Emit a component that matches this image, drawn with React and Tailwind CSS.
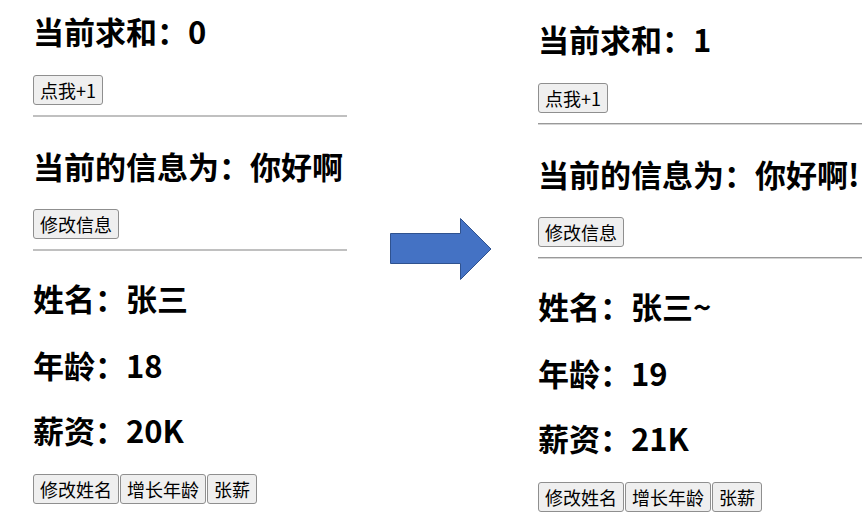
const headFont = { fontFamily: '"Noto Sans CJK SC", "Noto Sans", sans-serif' };

function Btn({ children }) {
  return (
    <button className="h-[30px] px-[6px] border border-[#8f8f8f] bg-[#efefef] rounded-[3px] text-[18px] leading-none text-black">
      {children}
    </button>
  );
}

function Panel({ sum, msg, name, age, salary, hr }) {
  return (
    <div className="flex flex-col items-start" style={headFont}>
      <h2 className="text-[31px] leading-[40px] font-bold">当前求和：{sum}</h2>
      <div className="mt-[24px]">
        <Btn>点我+1</Btn>
      </div>
      <div className={`mt-[10px] h-[2px] w-full ${hr}`} />
      <h2 className="mt-[29px] text-[31px] leading-[40px] font-bold">当前的信息为：{msg}</h2>
      <div className="mt-[23px]">
        <Btn>修改信息</Btn>
      </div>
      <div className={`mt-[10px] h-[2px] w-full ${hr}`} />
      <h2 className="mt-[27px] text-[31px] leading-[40px] font-bold">姓名：{name}</h2>
      <h2 className="mt-[27px] text-[31px] leading-[40px] font-bold">年龄：{age}</h2>
      <h2 className="mt-[25px] text-[31px] leading-[40px] font-bold">薪资：{salary}</h2>
      <div className="mt-[24px] flex gap-px">
        <Btn>修改姓名</Btn>
        <Btn>增长年龄</Btn>
        <Btn>张薪</Btn>
      </div>
    </div>
  );
}

export default function App() {
  return (
    <div className="w-[862px] h-[522px] bg-white overflow-hidden flex items-start text-black">
      <div className="ml-[33px] w-[314px] pt-[11px]">
        <Panel sum="0" msg="你好啊" name="张三" age="18" salary="20K" hr="bg-[#c0c0c0]" />
      </div>

      <svg className="ml-[43px] mt-[218px] shrink-0" width="102" height="62" viewBox="0 0 102 62">
        <path d="M0.5 15.5 H70.5 V0.5 L101 31 L70.5 61.5 V45.5 H0.5 Z" fill="#4472c4" stroke="#2f528f" strokeWidth="1" />
      </svg>

      <div className="ml-[46px] flex-1 pt-[19px]">
        <Panel sum="1" msg="你好啊!" name="张三~" age="19" salary="21K" hr="border-t border-[#999] bg-[#d4d4d4]" />
      </div>
    </div>
  );
}
